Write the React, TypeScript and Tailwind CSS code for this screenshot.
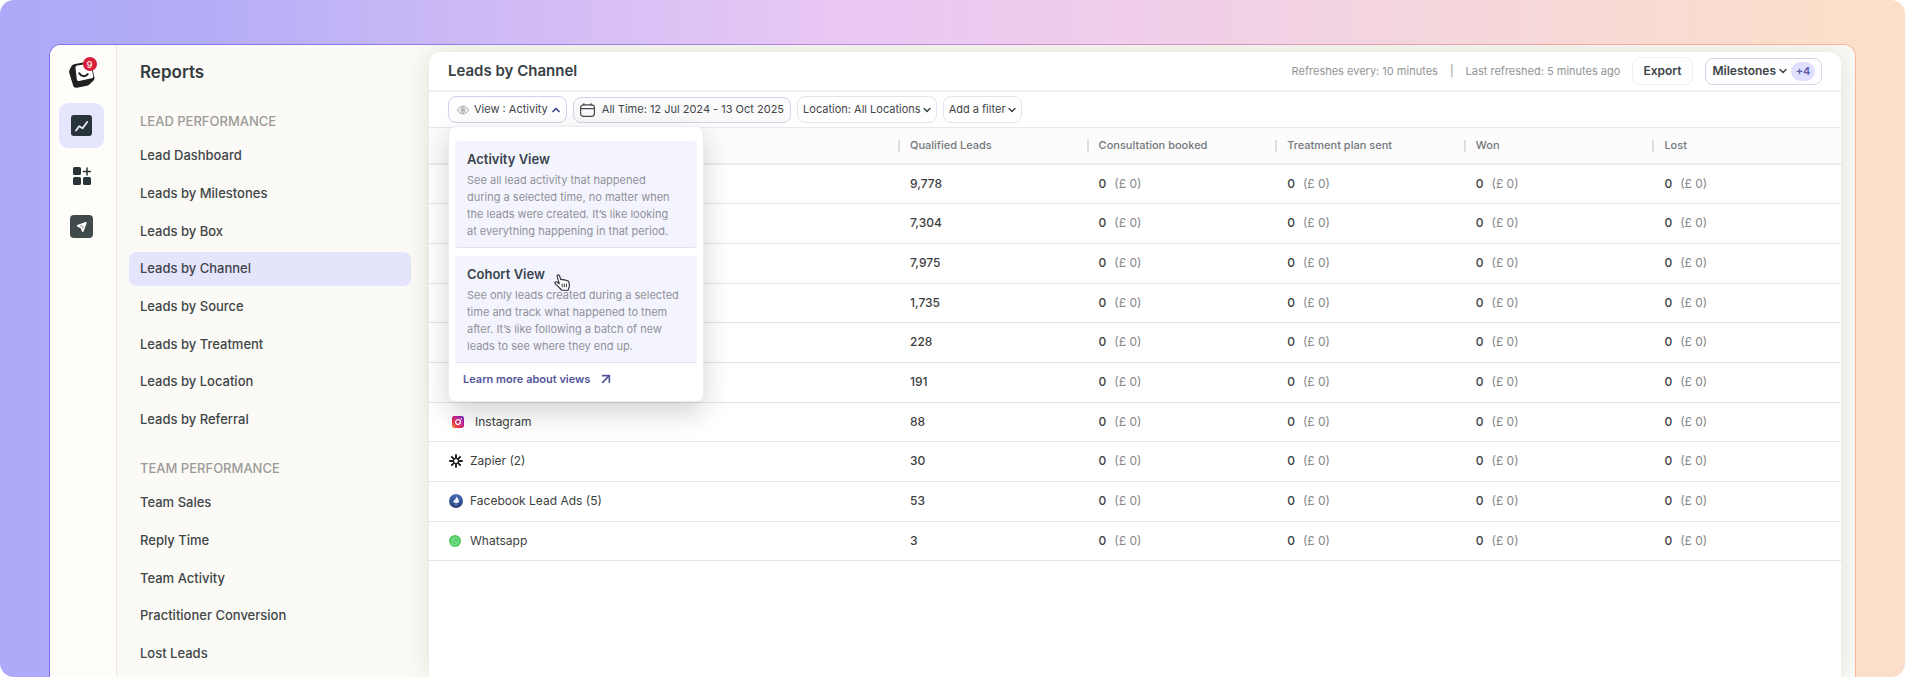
import React from "react";
import { ArrowUpRight, ChevronDown, ChevronUp } from "lucide-react";

const leadReports = [
  "Lead Dashboard",
  "Leads by Milestones",
  "Leads by Box",
  "Leads by Channel",
  "Leads by Source",
  "Leads by Treatment",
  "Leads by Location",
  "Leads by Referral",
];

const teamReports = [
  "Team Sales",
  "Reply Time",
  "Team Activity",
  "Practitioner Conversion",
  "Lost Leads",
];

const columns = [
  "Qualified Leads",
  "Consultation booked",
  "Treatment plan sent",
  "Won",
  "Lost",
];

type Row = { name?: string; icon?: React.ReactNode; leads: string };

function LogoIcon() {
  return (
    <svg viewBox="0 0 28 28" className="size-7" aria-hidden="true">
      <path
        d="M7 4 19 1.800c2.300-.4 3.900.5 4.400 2.700l2.900 12.200c.4 1.700 0 3.100-1.300 4.300l-3.600 3.500c-.7.7-1.500 1.100-2.500 1.300l-10 1.900c-2.200.4-3.600-.6-3.900-2.700L1.200 12.700c-.2-1.500.2-2.900 1-4.200l1.300-2.300C4.300 4.900 5.500 4.300 7 4Z"
        fill="#1f2022"
      />
      <path
        d="m9.400 5.600 11-1.900c1.300-.2 2.200.3 2.500 1.500l2.300 10.500c.3 1.300-.3 2.200-1.600 2.500L11.200 20.900c-1.300.3-2.200-.3-2.400-1.600L7.500 8.200c-.2-1.400.5-2.400 1.900-2.600Z"
        fill="#fff"
      />
      <path
        d="M11.300 13.200c1.900 3.500 6.100 4 8.500.8"
        fill="none"
        stroke="#1f2022"
        strokeWidth="2"
        strokeLinecap="round"
      />
    </svg>
  );
}

function TrendIcon() {
  return (
    <svg viewBox="0 0 21 21" className="size-[21px]" aria-hidden="true">
      <rect width="21" height="21" rx="3" fill="#28343a" />
      <path
        d="m5 15.500 3.200-4.300 3.400 2.100 4.600-6.300"
        fill="none"
        stroke="#e4e3fd"
        strokeWidth="1.900"
        strokeLinecap="round"
        strokeLinejoin="round"
      />
    </svg>
  );
}

function AppsIcon() {
  return (
    <svg viewBox="0 0 18 18" className="size-[18px]" aria-hidden="true">
      <rect width="8" height="8" rx="1.600" fill="#28343a" />
      <rect y="10" width="8" height="8" rx="1.600" fill="#28343a" />
      <rect x="10" y="10" width="8" height="8" rx="1.600" fill="#28343a" />
      <path
        d="M14 1v7M10.500 4.500h7"
        stroke="#28343a"
        strokeWidth="1.500"
        strokeLinecap="round"
      />
    </svg>
  );
}

function SendIcon() {
  return (
    <svg viewBox="0 0 23 23" className="size-[23px]" aria-hidden="true">
      <rect width="23" height="23" rx="4" fill="#404a4a" />
      <path
        d="M15.800 7.900 7.600 10.800l3.500 1.700 1.700 3.600 3-8.200Z"
        fill="#404a4a"
        stroke="#fff"
        strokeWidth="1.700"
        strokeLinejoin="round"
      />
      <path d="m15.600 8.100-4.300 4.300" stroke="#fff" strokeWidth="1.500" />
    </svg>
  );
}

function EyeIcon() {
  return (
    <svg viewBox="0 0 12 10" className="h-[10px] w-3" fill="none" stroke="#96999b" aria-hidden="true">
      <path d="M.6 5C1.800 2.500 3.800 1.200 6 1.200S10.200 2.500 11.400 5C10.200 7.500 8.200 8.800 6 8.800S1.800 7.500.6 5Z" />
      <circle cx="6" cy="5" r="2.200" />
      <circle cx="6" cy="5" r=".7" />
    </svg>
  );
}

function CalendarIcon() {
  return (
    <svg viewBox="0 0 15 14" className="h-[14px] w-[15px]" fill="none" stroke="#454b50" strokeWidth="1.200" aria-hidden="true">
      <rect x=".6" y="1.800" width="13.800" height="11.500" rx="2.800" />
      <path d="M.6 5.600h13.800M3.900.2v2.600M11.100.2v2.600" />
    </svg>
  );
}

function InstagramIcon() {
  return (
    <svg viewBox="0 0 12 12" className="size-3" aria-hidden="true">
      <defs>
        <linearGradient id="ig" x1="0" y1="1" x2="1" y2="0">
          <stop offset="0" stopColor="#f7a13a" />
          <stop offset=".3" stopColor="#e5253f" />
          <stop offset=".62" stopColor="#c2158a" />
          <stop offset="1" stopColor="#6a2bd0" />
        </linearGradient>
      </defs>
      <rect width="12" height="12" rx="2.400" fill="url(#ig)" />
      <rect x="1.900" y="1.900" width="8.200" height="8.200" rx="2.300" fill="none" stroke="#fff" strokeOpacity=".35" strokeWidth=".6" />
      <circle cx="6" cy="6.100" r="2.400" fill="none" stroke="#fff" strokeWidth="1.300" />
      <circle cx="9.300" cy="2.700" r=".8" fill="#fff" />
    </svg>
  );
}

function ZapierIcon() {
  return (
    <svg viewBox="0 0 14 14" className="size-[14px]" aria-hidden="true">
      <g stroke="#1d1e20" strokeWidth="1.900">
        <path d="M7 .3v4.200M7 9.500v4.200M.3 7h4.200M9.500 7h4.200M2.300 2.300l3 3M8.700 8.700l3 3M11.700 2.300l-3 3M5.300 8.700l-3 3" />
        <circle cx="7" cy="7" r="2.600" fill="none" strokeWidth="1.300" />
      </g>
    </svg>
  );
}

function FacebookAdsIcon() {
  return (
    <svg viewBox="0 0 14 14" className="size-[14px]" aria-hidden="true">
      <defs>
        <linearGradient id="fb" x1="0" y1="0" x2="0" y2="1">
          <stop offset="0" stopColor="#4a6db5" />
          <stop offset="1" stopColor="#233f7c" />
        </linearGradient>
      </defs>
      <circle cx="7" cy="7" r="7" fill="url(#fb)" />
      <path d="M7.300 2.600c1.400 1.500 2.700 2.900 2.700 4.400 0 1.300-1 2.300-2.500 2.300-1 0-1.500-.3-1.900-.9-.8.200-1.600-.2-1.500-1.100.1-.8 1-.8 1.600-1.400.9-.9 1.400-1.800 1.600-3.300Z" fill="#e9eefb" />
      <path d="M5.600 10.800h3" stroke="#8fa6d8" strokeWidth=".7" />
    </svg>
  );
}

function WhatsappIcon() {
  return (
    <svg viewBox="0 0 12 12" className="size-3" aria-hidden="true">
      <circle cx="6" cy="6" r="6" fill="#4ccb62" />
      <path d="m2.700 9.400.5-1.700A3.400 3.400 0 1 1 4.500 9l-1.800.4Z" fill="none" stroke="#b4ecbd" strokeWidth=".7" />
      <path d="M4.700 4.400c0 1.700 1.300 3 3 3.100" fill="none" stroke="#b4ecbd" strokeWidth=".9" strokeLinecap="round" />
    </svg>
  );
}

function HandCursor() {
  return (
    <svg viewBox="0 0 16 17" className="h-[17px] w-4" aria-hidden="true">
      <path
        d="M5.300 9.700 3.200 2.900C2.900 1.800 3.300 1 4 .9c.8-.2 1.300.2 1.600 1.100l1.200 3.700c.8-.5 1.600-.3 2 .3.900-.5 1.700-.3 2.100.3.900-.4 1.700-.1 2 .6 1-.3 1.600.1 1.800 1l.6 2.600c.3 1.600 0 2.600-.6 3.700l-.5 1.900-6.500.2c-.9-1.500-2.300-2.300-3.500-3.600L1.400 9.900c-.6-.8-.6-1.500-.1-1.900.7-.5 1.400-.3 2 .3l2 1.400Z"
        fill="#fff"
        stroke="#2b2d33"
        strokeWidth="1.100"
        strokeLinejoin="round"
      />
      <path d="M8.200 9.600v3.600M10.300 9.600v3.600M12.400 9.600v3.600" stroke="#2b2d33" strokeWidth=".9" />
    </svg>
  );
}

const rows: Row[] = [
  { leads: "9,778" },
  { leads: "7,304" },
  { leads: "7,975" },
  { leads: "1,735" },
  { leads: "228" },
  { leads: "191" },
  { name: "Instagram", icon: <span className="pr-1 pl-[3px]"><InstagramIcon /></span>, leads: "88" },
  { name: "Zapier (2)", icon: <ZapierIcon />, leads: "30" },
  { name: "Facebook Lead Ads (5)", icon: <FacebookAdsIcon />, leads: "53" },
  { name: "Whatsapp", icon: <span className="pr-[2px]"><WhatsappIcon /></span>, leads: "3" },
];

function NavGroup({ title, items }: { title: string; items: string[] }) {
  return (
    <section>
      <h3 className="px-[11px] text-[13px] leading-5 font-medium text-[#9b9b98]">{title}</h3>
      <ul className="mt-2">
        {items.map((item) => (
          <li key={item} className="mb-1 nth-[3n]:mb-[3px]">
            <a
              href="#"
              aria-current={item === "Leads by Channel" ? "page" : undefined}
              className="flex h-[34px] items-center rounded-lg px-[11px] text-[13px] font-medium text-[#3f4648] aria-[current=page]:bg-[#e5e4fd]"
            >
              {item}
            </a>
          </li>
        ))}
      </ul>
    </section>
  );
}

function ViewOption({ title, text, children }: { title: string; text: string; children?: React.ReactNode }) {
  return (
    <button
      type="button"
      className="relative block w-full rounded-[3px] border-b border-[#e2e2ea] bg-[#f4f4ff] pt-2 pr-[15px] pb-[7px] pl-3 text-left"
    >
      <span className="block text-[13px] leading-5 font-semibold text-[#39434c]">{title}</span>
      <span className="mt-[3px] block text-[11px] leading-[17px] text-[#909197]">{text}</span>
      {children}
    </button>
  );
}

export default function App() {
  return (
    <div className="bg-white font-[Inter,sans-serif] antialiased">
      <div className="flex h-screen flex-col overflow-hidden rounded-[14px] bg-linear-[to_right,#aea9f8_0%,#b3adf7_10%,#cab8f6_23%,#e8c7f4_43%,#efcdec_58%,#f4d6dc_76%,#fbdfca_96%] px-[49px] pt-11">
        <div className="flex min-h-0 flex-1 rounded-t-xl bg-linear-[to_right,#7d72f0_0%,#8f80ea_25%,#c98cd0_55%,#f2a9a0_85%,#fbb79c_100%] px-px pt-px">
          <div className="flex min-h-0 flex-1 overflow-hidden rounded-t-[11px] bg-[#fbfaf6]">
            <nav aria-label="Main" className="flex w-[67px] shrink-0 flex-col items-center border-r border-[#ebeadb] bg-[#fefdfa] pt-[15px] pr-[3px]">
              <a href="#" aria-label="Home" className="relative block">
                <LogoIcon />
                <span className="absolute -top-[3px] -right-px flex size-[14px] items-center justify-center rounded-full bg-[#d61f38] text-[9px] leading-none font-medium text-white">
                  9
                </span>
              </a>
              <a href="#" aria-label="Reports" className="mt-[15px] flex size-[45px] items-center justify-center rounded-[9px] bg-[#e6e5fe]">
                <TrendIcon />
              </a>
              <a href="#" aria-label="Apps" className="mt-[19px]">
                <AppsIcon />
              </a>
              <a href="#" aria-label="Send" className="mt-[30px]">
                <SendIcon />
              </a>
            </nav>

            <aside className="w-[312px] shrink-0 pt-[15px] pr-[18px] pl-3">
              <h2 className="px-[11px] text-[17px] leading-6 font-semibold text-[#343c40]">Reports</h2>
              <div className="mt-[27px] flex flex-col gap-[17px]">
                <NavGroup title="LEAD PERFORMANCE" items={leadReports} />
                <NavGroup title="TEAM PERFORMANCE" items={teamReports} />
              </div>
            </aside>

            <main className="mt-[7px] mr-[14px] flex min-w-0 flex-1 flex-col rounded-t-xl bg-white shadow-[0_0_26px_rgba(60,50,20,0.13)]">
              <header className="flex h-10 items-center border-b-2 border-[#efefef] px-[19px]">
                <h1 className="text-[15px] font-semibold text-[#384145]">Leads by Channel</h1>
                <p className="ml-auto flex gap-3 text-[11px] text-[#939494]">
                  <span>Refreshes every: 10 minutes</span>
                  <span>|</span>
                  <span>Last refreshed: 5 minutes ago</span>
                </p>
                <button type="button" className="ml-3 h-7 rounded-lg border border-[#eeeff2] px-[10px] text-xs font-semibold text-[#3b4448]">
                  Export
                </button>
                <button type="button" className="ml-3 flex h-[27px] items-center rounded-lg border border-[#d3d7e8] pr-[6px] pl-[7px] text-xs font-semibold text-[#3b4448]">
                  Milestones
                  <ChevronDown className="ml-px size-3" strokeWidth={3} />
                  <span className="ml-[2px] flex h-[19px] w-6 items-center justify-center rounded-full bg-[#e0dfff] text-[11px] text-[#5b5aa8]">
                    +4
                  </span>
                </button>
              </header>

              <div className="flex h-9 items-center gap-[6px] border-b border-[#e9e9ec] px-[19px] text-[#3f464a]">
                <div className="relative">
                  <button type="button" aria-expanded="true" className="flex h-[27px] items-center rounded-lg border border-[#cdd3ea] pr-1 pl-2 text-[11px] whitespace-nowrap">
                    <EyeIcon />
                    <span className="ml-[5px]">View : Activity</span>
                    <ChevronUp className="ml-[2px] size-3 text-[#44458a]" strokeWidth={3.500} />
                  </button>
                  <div className="absolute top-[30px] left-0 z-10 flex w-64 flex-col gap-2 rounded-lg border border-[#ececef] bg-white px-[6px] pt-[14px] pb-[14px] shadow-[0_10px_28px_rgba(0,0,0,0.18)]">
                    <ViewOption
                      title="Activity View"
                      text={"See all lead activity that happened during a selected time, no matter when the leads were created. It’s like looking at\u00a0everything happening in that period."}
                    />
                    <ViewOption
                      title="Cohort View"
                      text="See only leads created during a selected time and track what happened to them after. It’s like following a batch of new leads to see where they end up."
                    >
                      <span className="absolute top-[18px] left-[99px]">
                        <HandCursor />
                      </span>
                    </ViewOption>
                    <a href="#" className="flex h-4 items-center gap-2 px-2 text-[11px] font-semibold text-[#53559a]">
                      Learn more about views
                      <ArrowUpRight className="size-4" strokeWidth={2.500} />
                    </a>
                  </div>
                </div>
                <button type="button" className="flex h-[26px] items-center gap-[7px] rounded-lg border border-[#d0d5e6] bg-[#fafafb] px-[6px] text-[11px] whitespace-nowrap">
                  <CalendarIcon />
                  All Time: 12 Jul 2024 - 13 Oct 2025
                </button>
                <button type="button" className="flex h-[27px] items-center rounded-lg border border-[#e3e6ef] pr-[3px] pl-[5px] text-[11px] whitespace-nowrap">
                  Location: All Locations
                  <ChevronDown className="size-3" strokeWidth={3} />
                </button>
                <button type="button" className="flex h-[27px] items-center rounded-lg border border-[#e3e6ef] pr-[3px] pl-[5px] text-[11px] whitespace-nowrap">
                  Add a filter
                  <ChevronDown className="size-3" strokeWidth={3} />
                </button>
              </div>

              <table className="w-full table-fixed text-left text-xs">
                <thead>
                  <tr className="h-9 border-b-2 border-[#ebecee] bg-[#fcfcfd]">
                    <th className="w-[469px]" aria-label="Channel" />
                    {columns.map((column) => (
                      <th key={column} className="text-[11px] font-medium text-[#74777b]">
                        <span className="flex items-center gap-[10px]">
                          <span className="h-3 w-[2px] bg-[#dddee0]" />
                          {column}
                        </span>
                      </th>
                    ))}
                  </tr>
                </thead>
                <tbody>
                  {rows.map((row) => (
                    <tr key={row.leads} className="h-10 border-b border-[#e4e4e5] nth-[3n+1]:h-[39px]">
                      <td className="pl-5 text-[#3b3e40]">
                        {row.name && (
                          <span className="flex items-center gap-[7px]">
                            {row.icon}
                            {row.name}
                          </span>
                        )}
                      </td>
                      <td className="pl-3 font-medium text-[#3d4042]">{row.leads}</td>
                      {columns.slice(1).map((column) => (
                        <td key={column} className="pl-3">
                          <span className="font-medium text-[#3d4042]">0</span>
                          <span className="ml-2 text-[#858687]">(£ 0)</span>
                        </td>
                      ))}
                    </tr>
                  ))}
                </tbody>
              </table>
            </main>
          </div>
        </div>
      </div>
    </div>
  );
}
